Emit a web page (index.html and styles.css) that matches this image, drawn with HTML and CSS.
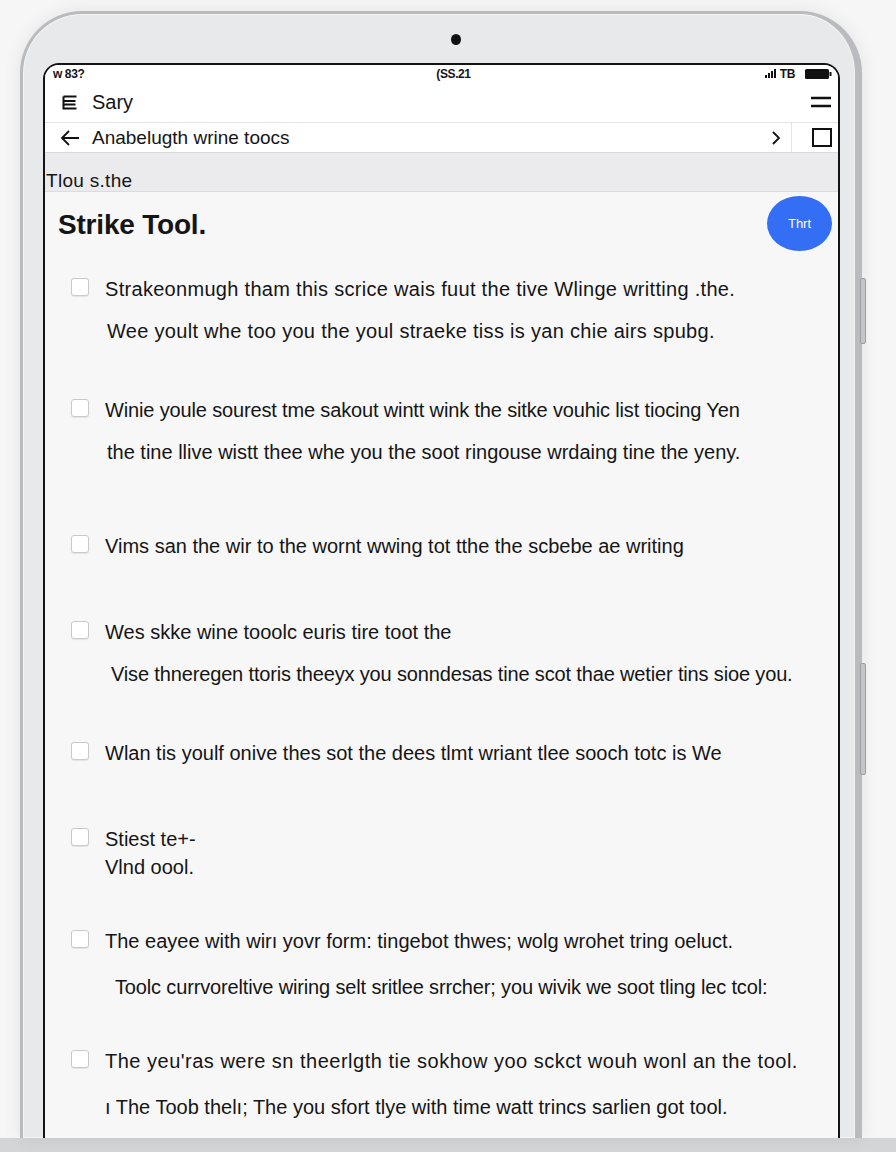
FILE: index.html
```html
<!DOCTYPE html>
<html lang="en">
<head>
    <meta charset="UTF-8">
    <meta name="viewport" content="width=device-width, initial-scale=1.0">
    <title>Strike Tool</title>
    <link rel="stylesheet" href="styles.css">
</head>
<body>
    <div class="device">
        <span class="side-btn side-btn-top"></span>
        <span class="side-btn side-btn-bottom"></span>
        <div class="camera-row"><span class="camera"></span></div>

        <div class="screen">
            <!-- Status bar -->
            <div class="status-bar">
                <span class="status-left">w 83?</span>
                <span class="status-center">(SS.21</span>
                <span class="status-right">
                    <svg width="13" height="11" viewBox="0 0 13 11"><path d="M1 10h2V7H1zM4 10h2V5H4zM7 10h2V3H7zM10 10h2V1h-2z" fill="#111"/></svg>
                    <span>TB</span>
                    <svg width="28" height="12" viewBox="0 0 28 12"><rect x="1" y="1" width="24" height="10" rx="1.5" fill="#111"/><rect x="25.5" y="4" width="2" height="4" fill="#111"/></svg>
                </span>
            </div>

            <!-- App bar -->
            <header class="app-bar">
                <svg class="app-icon" width="16" height="15" viewBox="0 0 16 15"><path d="M1.5 1.5h13M1.5 1.5v12h13M1.5 6h12M1.5 9.5h12" fill="none" stroke="#111" stroke-width="2"/></svg>
                <span class="app-title">Sary</span>
                <svg class="menu-icon" width="22" height="14" viewBox="0 0 22 14"><path d="M1 3h20M1 11h20" stroke="#111" stroke-width="2.6"/></svg>
            </header>

            <!-- Navigation row -->
            <nav class="nav-row">
                <svg class="back-icon" width="20" height="18" viewBox="0 0 20 18"><path d="M19 9H2M9 2L2 9l7 7" fill="none" stroke="#111" stroke-width="1.8"/></svg>
                <span class="nav-title">Anabelugth wrine toocs</span>
                <svg class="chevron" width="10" height="16" viewBox="0 0 10 16"><path d="M2 2l6 6-6 6" fill="none" stroke="#111" stroke-width="1.8"/></svg>
                <span class="nav-sep"></span>
                <span class="square-btn"></span>
            </nav>

            <div class="section-band">Tlou s.the</div>

            <main class="content">
                <div class="title-row">
                    <h1>Strike Tool.</h1>
                    <button class="fab">Thrt</button>
                </div>

                <ul class="task-list">
                    <li class="task">
                        <span class="check"></span>
                        <div class="lines">
                            <p class="wide">Strakeonmugh tham this scrice wais fuut the tive Wlinge writting .the.</p>
                            <p class="wide indent-s">Wee yoult whe too you the youl straeke tiss is yan chie airs spubg.</p>
                        </div>
                    </li>
                    <li class="task">
                        <span class="check"></span>
                        <div class="lines">
                            <p class="narrow">Winie youle sourest tme sakout wintt wink the sitke vouhic list tiocing Yen</p>
                            <p class="indent-s">the tine llive wistt thee whe you the soot ringouse wrdaing tine the yeny.</p>
                        </div>
                    </li>
                    <li class="task loose">
                        <span class="check"></span>
                        <div class="lines">
                            <p>Vims san the wir to the wornt wwing tot tthe the scbebe ae writing</p>
                        </div>
                    </li>
                    <li class="task mid">
                        <span class="check"></span>
                        <div class="lines">
                            <p>Wes skke wine tooolc euris tire toot the</p>
                            <p class="narrow indent-m">Vise thneregen ttoris theeyx you sonndesas tine scot thae wetier tins sioe you.</p>
                        </div>
                    </li>
                    <li class="task">
                        <span class="check"></span>
                        <div class="lines">
                            <p>Wlan tis youlf onive thes sot the dees tlmt wriant tlee sooch totc is We</p>
                        </div>
                    </li>
                    <li class="task mid compact">
                        <span class="check"></span>
                        <div class="lines">
                            <p>Stiest te+-</p>
                            <p>Vlnd oool.</p>
                        </div>
                    </li>
                    <li class="task tight airy">
                        <span class="check"></span>
                        <div class="lines">
                            <p>The eayee with wirı yovr form: tingebot thwes; wolg wrohet tring oeluct.</p>
                            <p class="narrow indent-l">Toolc currvoreltive wiring selt sritlee srrcher; you wivik we soot tling lec tcol:</p>
                        </div>
                    </li>
                    <li class="task tight airy">
                        <span class="check"></span>
                        <div class="lines">
                            <p class="wider">The yeu'ras were sn theerlgth tie sokhow yoo sckct wouh wonl an the tool.</p>
                            <p>ı The Toob thelı; The you sfort tlye with time watt trincs sarlien got tool.</p>
                            <p class="indent-m">The stroke the write with the tool the then you went tlie stroke you.</p>
                        </div>
                    </li>
                </ul>
            </main>
        </div>
    </div>
    <div class="bottom-strip"></div>
</body>
</html>
```

FILE: styles.css
```css
html, body {
    margin: 0;
    padding: 0;
}
body {
    background-color: #f6f6f6;
    font-family: "Liberation Sans", Arial, sans-serif;
    color: #151515;
    height: 1152px;
    overflow: hidden;
}

/* Tablet frame */
.device {
    position: relative;
    box-sizing: border-box;
    width: 842px;
    height: 1127px;
    margin: 11px 0 0 20px;
    padding: 0 15px 0 20px;
    background-color: #e8e9eb;
    border: 3px solid #b9bbbe;
    border-right-width: 7px;
    border-bottom: none;
    border-radius: 62px 62px 0 0;
    box-shadow: 0 0 18px rgba(0, 0, 0, 0.08), inset 0 0 0 1px #f4f4f5;
    display: flex;
    flex-direction: column;
}
.side-btn {
    position: absolute;
    right: -11px;
    width: 4px;
    background-color: #c3c5c8;
    border: 1px solid #9c9ea2;
    border-radius: 2px;
}
.side-btn-top {
    top: 264px;
    height: 64px;
}
.side-btn-bottom {
    top: 649px;
    height: 110px;
}
.camera-row {
    flex: none;
    height: 49px;
    display: flex;
    justify-content: center;
    align-items: flex-start;
    padding-left: 28px;
}
.camera {
    width: 10px;
    height: 11px;
    margin-top: 20px;
    border-radius: 50%;
    background-color: #111;
}

/* Screen */
.screen {
    flex: 1;
    min-height: 0;
    overflow: hidden;
    background-color: #f7f7f7;
    border: 2px solid #141414;
    border-bottom: none;
    border-radius: 16px 16px 0 0;
    display: flex;
    flex-direction: column;
}
.screen > * {
    flex: none;
}
.status-bar {
    height: 17px;
    background-color: #fff;
    display: grid;
    grid-template-columns: 1fr auto 1fr;
    align-items: center;
    padding: 0 6px 0 8px;
    font-size: 12px;
    font-weight: bold;
    letter-spacing: -0.4px;
}
.status-center {
    padding-left: 22px;
}
.status-right {
    justify-self: end;
    display: flex;
    align-items: center;
    gap: 3px;
}
.status-right span {
    margin-right: 6px;
}
.app-bar {
    height: 40px;
    background-color: #fff;
    border-bottom: 1px solid #e4e4e4;
    display: flex;
    align-items: center;
    padding: 0 6px 0 17px;
}
.app-icon {
    margin-top: 1px;
}
.app-title {
    margin-left: 14px;
    font-size: 20px;
    flex: 1;
}
.nav-row {
    height: 29px;
    background-color: #fff;
    border-bottom: 1px solid #d9d9db;
    display: flex;
    align-items: center;
    padding: 0 6px 0 15px;
}
.nav-title {
    margin-left: 12px;
    font-size: 19px;
    flex: 1;
}
.chevron {
    margin-right: 10px;
}
.nav-sep {
    align-self: stretch;
    width: 1px;
    background-color: #e4e4e4;
    margin-right: 20px;
}
.square-btn {
    width: 16px;
    height: 15px;
    border: 2px solid #111;
}
.section-band {
    height: 39px;
    box-sizing: border-box;
    padding: 17px 0 0 1px;
    background-color: #ebebed;
    border-bottom: 1px solid #dcdcde;
    font-size: 19px;
    line-height: 22px;
    letter-spacing: 0.3px;
}

/* Content */
.content {
    flex: 1;
}
.title-row {
    display: flex;
    align-items: center;
    justify-content: space-between;
    padding: 4px 6px 0 13px;
}
h1 {
    margin: 2px 0 0;
    font-size: 28px;
    font-weight: bold;
    letter-spacing: -0.2px;
}
.fab {
    width: 65px;
    height: 55px;
    border: none;
    border-radius: 50%;
    background-color: #336ef5;
    color: #fff;
    font-family: inherit;
    font-size: 13px;
    cursor: pointer;
}
.task-list {
    list-style: none;
    margin: 0;
    padding: 26px 0 0 26px;
}
.task {
    display: flex;
    align-items: flex-start;
    gap: 16px;
    margin-top: 55px;
}
.task:first-child {
    margin-top: 0;
}
.task.loose {
    margin-top: 70px;
}
.task.mid {
    margin-top: 62px;
}
.task.tight {
    margin-top: 50px;
}
.check {
    flex: none;
    width: 16px;
    height: 16px;
    margin-top: 1px;
    background-color: #fff;
    border: 1px solid #c9c9c9;
    border-radius: 3px;
    box-shadow: 0 1px 1px rgba(0, 0, 0, 0.08);
}
.lines p {
    margin: 0;
    font-size: 20px;
    line-height: 24px;
    letter-spacing: 0;
    white-space: nowrap;
}
.lines p.wide {
    letter-spacing: 0.3px;
}
.lines p.wider {
    letter-spacing: 0.5px;
}
.lines p.narrow {
    letter-spacing: -0.15px;
}
.lines p + p {
    margin-top: 18px;
}
.compact .lines p + p {
    margin-top: 4px;
}
.airy .lines p + p {
    margin-top: 22px;
}
.indent-s {
    padding-left: 2px;
}
.indent-m {
    padding-left: 6px;
}
.indent-l {
    padding-left: 10px;
}
.bottom-strip {
    height: 15px;
    background-color: #d3d5d7;
}
```
